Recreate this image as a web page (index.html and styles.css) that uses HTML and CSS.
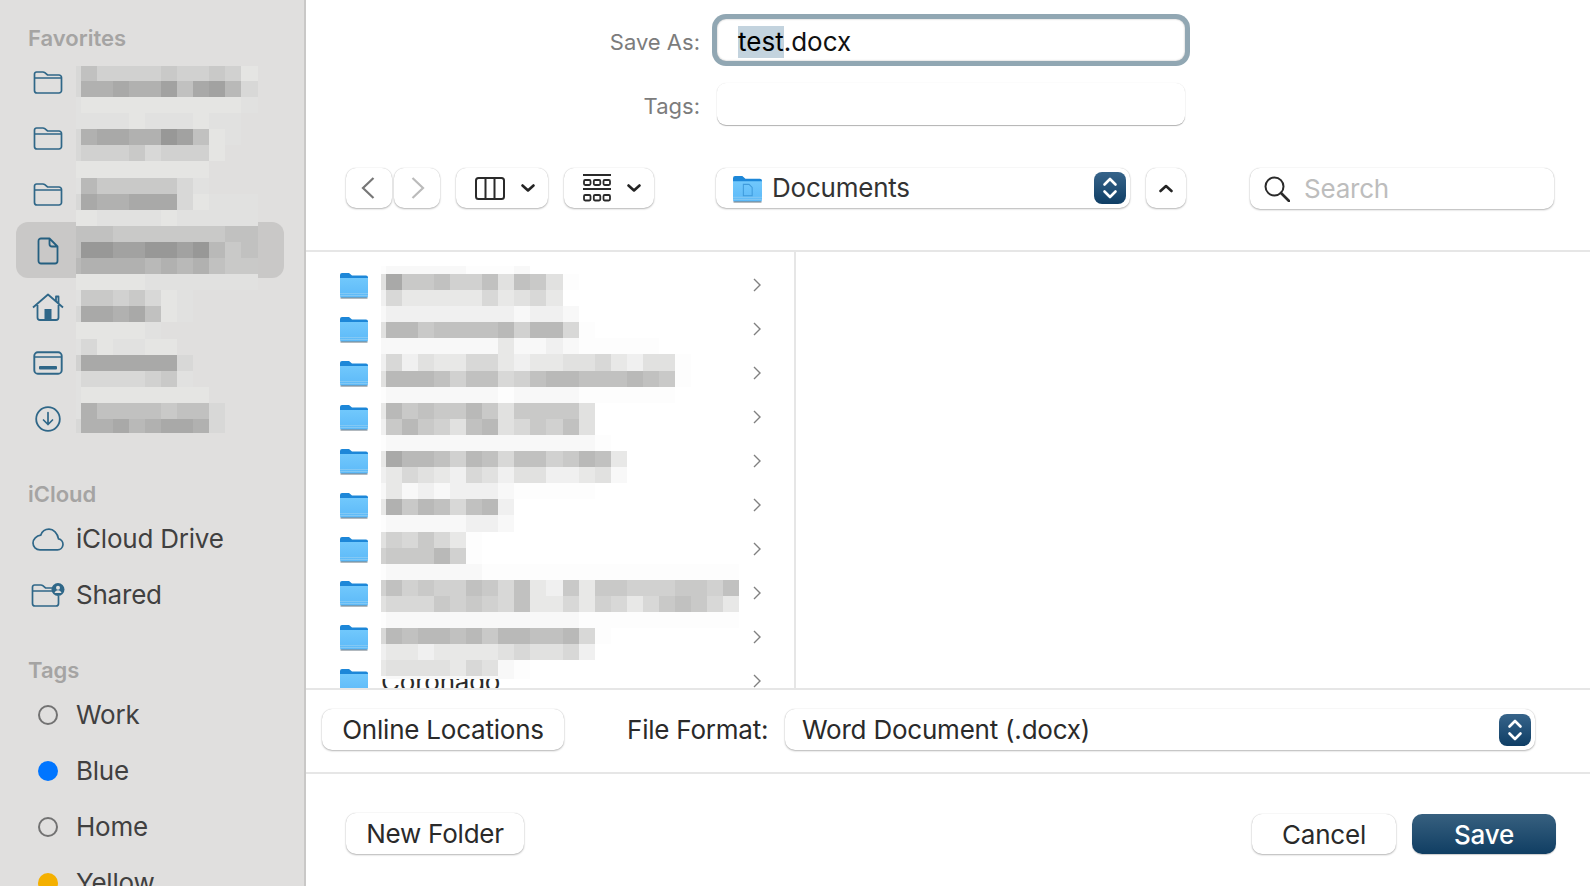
FILE: index.html
```html
<!DOCTYPE html>
<html lang="en">
<head>
<meta charset="utf-8">
<title>Save</title>
<link rel="stylesheet" href="styles.css">
</head>
<body>
<svg class="defs" aria-hidden="true">
  <defs>
    <linearGradient id="fbody" x1="0" y1="0" x2="0" y2="1"><stop offset="0" stop-color="#71c8fc"/><stop offset="1" stop-color="#5cb9f8"/></linearGradient>
    <symbol id="blue-folder" viewBox="0 0 28 28">
      <path d="M0 4a2 2 0 0 1 2-2h7l3 2.500h14a2 2 0 0 1 2 2V10H0z" fill="#1d87d8"/>
      <path d="M0 7h28v18a2 2 0 0 1-2 2H2a2 2 0 0 1-2-2z" fill="url(#fbody)"/>
      <path d="M0 22.500h28M0 24.500h28" stroke="#8ccbf2" stroke-width=".8"/>
      <path d="M.5 27h27" stroke="#7f8b94" stroke-width="1.200"/>
    </symbol>
    <symbol id="side-folder" viewBox="0 1 30 24">
      <path d="M1.500 4v16.500A2.500 2.500 0 0 0 4 23h22a2.500 2.500 0 0 0 2.500-2.500V7.500A2.500 2.500 0 0 0 26 5H14.500L11.800 2.700a3 3 0 0 0-2-.7H3.500a2 2 0 0 0-2 2zM1.500 8h27" fill="none" stroke="#2f6788" stroke-width="1.700"/>
    </symbol>
    <symbol id="stepper" viewBox="0 0 32 32">
      <path d="M10.500 12.500 16 7l5.500 5.500M10.500 19.500 16 25l5.500-5.500" fill="none" stroke="#fff" stroke-width="2.600" stroke-linecap="round" stroke-linejoin="round"/>
    </symbol>
    <symbol id="mini-chev" viewBox="0 0 14 8">
      <path d="M1.500 1.500 7 6.500l5.500-5" fill="none" stroke="#242424" stroke-width="2.600" stroke-linecap="round" stroke-linejoin="round"/>
    </symbol>
    <symbol id="row-chev" viewBox="0 0 8 14">
      <path d="M1 1l6 6-6 6" fill="none" stroke="#808080" stroke-width="1.400"/>
    </symbol>
  </defs>
</svg>

<div class="app">
  <aside class="sidebar">
    <h2 class="group-title">Favorites</h2>
    <div class="side-row"><span class="side-icon"><svg width="30" height="24"><use href="#side-folder"/></svg></span></div>
    <div class="side-row"><span class="side-icon"><svg width="30" height="24"><use href="#side-folder"/></svg></span></div>
    <div class="side-row"><span class="side-icon"><svg width="30" height="24"><use href="#side-folder"/></svg></span></div>
    <div class="side-row selected"><span class="side-icon">
      <svg width="22" height="28" viewBox="0 0 22 28"><path d="M4 1.500h8.500l8 8V24a2.500 2.500 0 0 1-2.500 2.500H4A2.500 2.500 0 0 1 1.500 24V4A2.500 2.500 0 0 1 4 1.500zM12.500 1.500V7a2.500 2.500 0 0 0 2.500 2.500h5.500" fill="none" stroke="#245f80" stroke-width="1.800" stroke-linejoin="round"/></svg>
    </span></div>
    <div class="side-row"><span class="side-icon">
      <svg width="32" height="28" viewBox="0 0 32 28"><path d="M1 14.500 16 1.500l15 13M5.500 12v12.500A2.500 2.500 0 0 0 8 27h16a2.500 2.500 0 0 0 2.500-2.500V12M24 8V3.500h2.500V10.500" fill="none" stroke="#2f6788" stroke-width="1.800" stroke-linejoin="round"/><rect x="12.500" y="16" width="7" height="11" fill="#2f6788"/></svg>
    </span></div>
    <div class="side-row"><span class="side-icon">
      <svg width="30" height="24" viewBox="0 0 30 24"><rect x="1.300" y="1.300" width="27.400" height="21.400" rx="3.500" fill="none" stroke="#2f6788" stroke-width="1.900"/><path d="M1.500 6h27" stroke="#2f6788" stroke-width="1.500"/><rect x="6" y="15" width="18" height="3.500" rx="1" fill="#2f6788"/></svg>
    </span></div>
    <div class="side-row"><span class="side-icon">
      <svg width="26" height="26" viewBox="0 0 26 26"><circle cx="13" cy="13" r="11.800" fill="none" stroke="#2f6788" stroke-width="1.800"/><path d="M13 6.500v12M8.500 14l4.500 4.500 4.500-4.500" fill="none" stroke="#2f6788" stroke-width="1.700" stroke-linecap="round" stroke-linejoin="round"/></svg>
    </span></div>

    <h2 class="group-title spaced">iCloud</h2>
    <div class="side-row"><span class="side-icon">
      <svg width="32" height="23" viewBox="0 0 32 23"><path d="M8 21.800h17.500a5.500 5.500 0 0 0 1-10.900C25.500 5 21.500 1.200 17 1.200c-4 0-7 2.400-8.300 6C4.500 7.800 1 11 1 15c0 3.800 3 6.800 7 6.800z" fill="none" stroke="#2f6788" stroke-width="1.700"/></svg>
    </span><span class="side-label">iCloud Drive</span></div>
    <div class="side-row"><span class="side-icon">
      <svg width="34" height="24" viewBox="0 0 34 24"><path d="M1.500 4v16.500A2.500 2.500 0 0 0 4 23h21a2.500 2.500 0 0 0 2.500-2.500V13M1.500 8H22M1.500 4a2 2 0 0 1 2-2h6.300a3 3 0 0 1 2 .7L14.500 5H21" fill="none" stroke="#2f6788" stroke-width="1.700"/><circle cx="27" cy="6.500" r="6.500" fill="#2f6788"/><circle cx="27" cy="4.800" r="2" fill="#e0dfde"/><path d="M23.500 10c.6-2 2-2.800 3.500-2.800s2.900.8 3.500 2.800z" fill="#e0dfde"/></svg>
    </span><span class="side-label">Shared</span></div>

    <h2 class="group-title spaced">Tags</h2>
    <div class="side-row"><span class="side-icon"><span class="tag-ring"></span></span><span class="side-label">Work</span></div>
    <div class="side-row"><span class="side-icon"><span class="tag-dot blue"></span></span><span class="side-label">Blue</span></div>
    <div class="side-row"><span class="side-icon"><span class="tag-ring"></span></span><span class="side-label">Home</span></div>
    <div class="side-row"><span class="side-icon"><span class="tag-dot yellow"></span></span><span class="side-label">Yellow</span></div>

    <div class="mosaic side-mosaic" aria-hidden="true">
      <div class="m short"><i class="p d8"></i><i class="c0"></i><i class="d0"></i><i class="d0"></i><i class="d0"></i><i class="d0"></i><i class="c8"></i><i class="d0"></i><i class="d0"></i><i class="c8"></i><i class="d0"></i><i class="e8"></i></div>
      <div class="m"><i class="p d8"></i><i class="b0"></i><i class="b0"></i><i class="a8"></i><i class="b0"></i><i class="b0"></i><i class="a0"></i><i class="c0"></i><i class="a8"></i><i class="a0"></i><i class="b8"></i><i class="d8"></i></div>
      <div class="m"><i class="p e0"></i><i class="e8"></i><i class="e8"></i><i class="e8"></i><i class="e8"></i><i class="e8"></i><i class="e8"></i><i class="e8"></i><i class="e8"></i><i class="e8"></i><i class="e8"></i><i class="e0"></i></div>
      <div class="m"><i class="p e0"></i><i class="e0"></i><i class="e0"></i><i class="e0"></i><i class="e8"></i><i class="e0"></i><i class="e0"></i><i class="e0"></i><i class="e8"></i><i class="e0"></i><i class="e0"></i></div>
      <div class="m"><i class="p d8"></i><i class="b0"></i><i class="a8"></i><i class="a8"></i><i class="b0"></i><i class="b0"></i><i class="n98"></i><i class="a0"></i><i class="c0"></i><i class="e8"></i><i class="e0"></i></div>
      <div class="m"><i class="p d8"></i><i class="d0"></i><i class="d0"></i><i class="d0"></i><i class="c8"></i><i class="d8"></i><i class="d0"></i><i class="d0"></i><i class="d0"></i><i class="e8"></i></div>
      <div class="m"><i class="p e8"></i><i class="e8"></i><i class="e8"></i><i class="e8"></i><i class="e8"></i><i class="e8"></i><i class="e8"></i><i class="e8"></i><i class="e8"></i></div>
      <div class="m"><i class="p e0"></i><i class="b8"></i><i class="c8"></i><i class="c8"></i><i class="c8"></i><i class="c8"></i><i class="c8"></i><i class="d8"></i><i class="e0"></i></div>
      <div class="m"><i class="p d8"></i><i class="a8"></i><i class="b0"></i><i class="b0"></i><i class="a8"></i><i class="a8"></i><i class="a8"></i><i class="d8"></i><i class="e8"></i><i class="e0"></i><i class="e0"></i><i class="e0"></i></div>
      <div class="m"><i class="p e8"></i><i class="e8"></i><i class="e0"></i><i class="e0"></i><i class="e0"></i><i class="e0"></i><i class="e8"></i><i class="e0"></i><i class="e0"></i><i class="e0"></i><i class="e0"></i><i class="e0"></i></div>
      <div class="m"><i class="p c0"></i><i class="c0"></i><i class="c0"></i><i class="c8"></i><i class="c8"></i><i class="c8"></i><i class="c8"></i><i class="c8"></i><i class="c8"></i><i class="c8"></i><i class="c0"></i><i class="c0"></i></div>
      <div class="m"><i class="p c0"></i><i class="n98"></i><i class="n98"></i><i class="a0"></i><i class="a0"></i><i class="n98"></i><i class="n98"></i><i class="a0"></i><i class="n98"></i><i class="b8"></i><i class="c8"></i><i class="c0"></i></div>
      <div class="m"><i class="p b8"></i><i class="b0"></i><i class="b0"></i><i class="b0"></i><i class="b0"></i><i class="b8"></i><i class="b0"></i><i class="b8"></i><i class="b0"></i><i class="c0"></i><i class="c8"></i><i class="c8"></i></div>
      <div class="m"><i class="p e8"></i><i class="e8"></i><i class="e8"></i><i class="e8"></i><i class="e8"></i><i class="e0"></i><i class="e0"></i><i class="e0"></i><i class="e0"></i><i class="e0"></i><i class="e0"></i><i class="e0"></i></div>
      <div class="m"><i class="p e0"></i><i class="c8"></i><i class="c8"></i><i class="d0"></i><i class="c8"></i><i class="d8"></i><i class="e8"></i><i class="e0"></i></div>
      <div class="m"><i class="p d8"></i><i class="a8"></i><i class="a8"></i><i class="b0"></i><i class="a8"></i><i class="c0"></i><i class="e8"></i><i class="e0"></i></div>
      <div class="m"><i class="p e8"></i><i class="e8"></i><i class="e8"></i><i class="e8"></i><i class="e8"></i><i class="e0"></i></div>
      <div class="m"><i class="p e0"></i><i class="d8"></i><i class="e8"></i><i class="e0"></i><i class="e0"></i><i class="e8"></i><i class="e8"></i></div>
      <div class="m"><i class="p d0"></i><i class="a8"></i><i class="a8"></i><i class="a8"></i><i class="a8"></i><i class="a8"></i><i class="a8"></i><i class="d8"></i></div>
      <div class="m"><i class="p e0"></i><i class="d8"></i><i class="d8"></i><i class="d8"></i><i class="d8"></i><i class="d0"></i><i class="c8"></i><i class="e0"></i></div>
      <div class="m"><i class="p e0"></i><i class="e8"></i><i class="e8"></i><i class="e8"></i><i class="e8"></i><i class="e8"></i><i class="e8"></i><i class="e8"></i><i class="e8"></i></div>
      <div class="m"><i class="p e0"></i><i class="b0"></i><i class="c0"></i><i class="c0"></i><i class="c0"></i><i class="c0"></i><i class="c8"></i><i class="c0"></i><i class="c0"></i><i class="d8"></i></div>
      <div class="m last"><i class="p d8"></i><i class="b0"></i><i class="b0"></i><i class="a8"></i><i class="b8"></i><i class="b0"></i><i class="a8"></i><i class="a8"></i><i class="b0"></i><i class="d8"></i></div>
    </div>
  </aside>

  <main class="main">
    <section class="name-form">
      <label class="form-label">Save As:</label>
      <div class="field focused"><span class="selection">test</span>.docx</div>
      <label class="form-label">Tags:</label>
      <div class="field"></div>
    </section>

    <section class="toolbar">
      <div class="nav-pair">
        <button class="btn nav back"><svg width="14" height="22" viewBox="0 0 14 22"><path d="M12.500 1 2 11l10.500 10" fill="none" stroke="#777" stroke-width="2.200"/></svg></button>
        <button class="btn nav forward"><svg width="14" height="22" viewBox="0 0 14 22"><path d="M1.500 1 12 11 1.500 21" fill="none" stroke="#bbb" stroke-width="2.200"/></svg></button>
      </div>
      <button class="btn view">
        <svg width="30" height="23" viewBox="0 0 30 23"><rect x="1" y="1" width="28" height="21" rx="2.500" fill="none" stroke="#2a2a2a" stroke-width="2"/><path d="M10.500 1v21M19.500 1v21" stroke="#2a2a2a" stroke-width="2"/></svg>
        <svg width="14" height="8"><use href="#mini-chev"/></svg>
      </button>
      <button class="btn group">
        <svg width="28" height="28" viewBox="0 0 28 28"><path d="M0 1h28M0 15h28" stroke="#2a2a2a" stroke-width="1.800"/><g fill="none" stroke="#2a2a2a" stroke-width="1.800"><rect x="1" y="6" width="6.500" height="5" rx="1.200"/><rect x="10.800" y="6" width="6.500" height="5" rx="1.200"/><rect x="20.500" y="6" width="6.500" height="5" rx="1.200"/><rect x="1" y="21" width="6.500" height="5.500" rx="1.200"/><rect x="10.800" y="21" width="6.500" height="5.500" rx="1.200"/><rect x="20.500" y="21" width="6.500" height="5.500" rx="1.200"/></g></svg>
        <svg width="14" height="8"><use href="#mini-chev"/></svg>
      </button>
      <div class="btn location">
        <svg class="loc-folder" width="29" height="29" viewBox="0 0 28 28"><use href="#blue-folder"/><path d="M10 10h5.500l3 3v8h-8.500z" fill="none" stroke="#3f9bdc" stroke-width="1"/></svg>
        <span class="loc-name">Documents</span>
        <span class="stepper"><svg width="32" height="32"><use href="#stepper"/></svg></span>
      </div>
      <button class="btn up"><svg width="14" height="9" viewBox="0 0 14 8"><path d="M1.500 6.500 7 1.500l5.500 5" fill="none" stroke="#242424" stroke-width="2.600" stroke-linecap="round" stroke-linejoin="round"/></svg></button>
      <div class="btn search">
        <svg width="26" height="26" viewBox="0 0 26 26"><circle cx="10.500" cy="10.500" r="9" fill="none" stroke="#2a2a2a" stroke-width="2"/><path d="M17 17l8 8" stroke="#2a2a2a" stroke-width="2.600" stroke-linecap="round"/></svg>
        <span class="search-text">Search</span>
      </div>
    </section>

    <section class="browser">
      <div class="list">
        <div class="list-row"><svg width="28" height="28"><use href="#blue-folder"/></svg><svg width="8" height="14"><use href="#row-chev"/></svg></div>
        <div class="list-row"><svg width="28" height="28"><use href="#blue-folder"/></svg><svg width="8" height="14"><use href="#row-chev"/></svg></div>
        <div class="list-row"><svg width="28" height="28"><use href="#blue-folder"/></svg><svg width="8" height="14"><use href="#row-chev"/></svg></div>
        <div class="list-row"><svg width="28" height="28"><use href="#blue-folder"/></svg><svg width="8" height="14"><use href="#row-chev"/></svg></div>
        <div class="list-row"><svg width="28" height="28"><use href="#blue-folder"/></svg><svg width="8" height="14"><use href="#row-chev"/></svg></div>
        <div class="list-row"><svg width="28" height="28"><use href="#blue-folder"/></svg><svg width="8" height="14"><use href="#row-chev"/></svg></div>
        <div class="list-row"><svg width="28" height="28"><use href="#blue-folder"/></svg><svg width="8" height="14"><use href="#row-chev"/></svg></div>
        <div class="list-row"><svg width="28" height="28"><use href="#blue-folder"/></svg><svg width="8" height="14"><use href="#row-chev"/></svg></div>
        <div class="list-row"><svg width="28" height="28"><use href="#blue-folder"/></svg><svg width="8" height="14"><use href="#row-chev"/></svg></div>
        <div class="list-row"><svg width="28" height="28"><use href="#blue-folder"/></svg><span class="row-name">Coronado</span><svg width="8" height="14"><use href="#row-chev"/></svg></div>

        <div class="mosaic list-mosaic" aria-hidden="true">
          <div class="m half"><i class="p fc"></i><i class="f8"></i><i class="f8"></i><i class="f8"></i><i class="f8"></i><i class="f8"></i><i class="fc"></i><i class="fc"></i><i class="fc"></i><i class="f8"></i></div>
          <div class="m"><i class="p e0"></i><i class="a8"></i><i class="c8"></i><i class="c8"></i><i class="c0"></i><i class="d0"></i><i class="d0"></i><i class="c0"></i><i class="e0"></i><i class="c0"></i><i class="c8"></i><i class="e0"></i><i class="fc"></i></div>
          <div class="m"><i class="p f0"></i><i class="d8"></i><i class="e8"></i><i class="e8"></i><i class="e8"></i><i class="e8"></i><i class="e8"></i><i class="d8"></i><i class="e8"></i><i class="e0"></i><i class="d8"></i><i class="e8"></i></div>
          <div class="m"><i class="p f8"></i><i class="f0"></i><i class="f0"></i><i class="f0"></i><i class="f0"></i><i class="f0"></i><i class="f0"></i><i class="f0"></i><i class="f0"></i><i class="f8"></i><i class="f0"></i><i class="f0"></i><i class="f8"></i></div>
          <div class="m"><i class="p e0"></i><i class="b8"></i><i class="b8"></i><i class="c8"></i><i class="c0"></i><i class="c0"></i><i class="c0"></i><i class="c0"></i><i class="b8"></i><i class="d0"></i><i class="b8"></i><i class="b8"></i><i class="d8"></i><i class="fc"></i></div>
          <div class="m"><i class="p f8"></i><i class="f8"></i><i class="f8"></i><i class="f8"></i><i class="f8"></i><i class="f8"></i><i class="f8"></i><i class="f8"></i><i class="e8"></i><i class="f8"></i><i class="f8"></i><i class="f0"></i><i class="f8"></i><i class="fc"></i><i class="fc"></i><i class="fc"></i><i class="fc"></i><i class="fc"></i></div>
          <div class="m"><i class="p f0"></i><i class="d8"></i><i class="f0"></i><i class="e0"></i><i class="e8"></i><i class="e8"></i><i class="d8"></i><i class="d8"></i><i class="e8"></i><i class="f0"></i><i class="e8"></i><i class="e8"></i><i class="e0"></i><i class="e0"></i><i class="d8"></i><i class="e8"></i><i class="f0"></i><i class="e0"></i><i class="e0"></i><i class="fc"></i></div>
          <div class="m"><i class="p e0"></i><i class="b8"></i><i class="b8"></i><i class="b8"></i><i class="c0"></i><i class="d0"></i><i class="c0"></i><i class="c0"></i><i class="d8"></i><i class="d0"></i><i class="c0"></i><i class="b8"></i><i class="b8"></i><i class="c0"></i><i class="c0"></i><i class="c0"></i><i class="b8"></i><i class="c0"></i><i class="c8"></i><i class="fc"></i></div>
          <div class="m"><i class="p fc"></i><i class="f8"></i><i class="f8"></i><i class="f8"></i><i class="f8"></i><i class="f8"></i><i class="f8"></i><i class="f8"></i><i class="fc"></i><i class="f8"></i><i class="f8"></i><i class="f8"></i><i class="f8"></i><i class="fc"></i><i class="fc"></i><i class="fc"></i><i class="fc"></i><i class="fc"></i><i class="fc"></i></div>
          <div class="m"><i class="p e8"></i><i class="b8"></i><i class="c8"></i><i class="c0"></i><i class="c8"></i><i class="c8"></i><i class="b8"></i><i class="c8"></i><i class="e0"></i><i class="c8"></i><i class="c8"></i><i class="c8"></i><i class="c8"></i><i class="e0"></i></div>
          <div class="m"><i class="p f0"></i><i class="c8"></i><i class="b8"></i><i class="c8"></i><i class="d0"></i><i class="e0"></i><i class="c0"></i><i class="b8"></i><i class="e0"></i><i class="d8"></i><i class="c8"></i><i class="d0"></i><i class="c0"></i><i class="e0"></i></div>
          <div class="m"><i class="p fc"></i><i class="f8"></i><i class="f8"></i><i class="f8"></i><i class="f8"></i><i class="f8"></i><i class="f8"></i><i class="f8"></i><i class="f8"></i><i class="f8"></i><i class="f8"></i><i class="f8"></i><i class="f8"></i><i class="f8"></i><i class="fc"></i></div>
          <div class="m"><i class="p e8"></i><i class="a8"></i><i class="b8"></i><i class="b8"></i><i class="c0"></i><i class="d0"></i><i class="b8"></i><i class="c0"></i><i class="d8"></i><i class="c0"></i><i class="c0"></i><i class="d0"></i><i class="c8"></i><i class="b8"></i><i class="c0"></i><i class="e8"></i></div>
          <div class="m"><i class="p f0"></i><i class="e8"></i><i class="d8"></i><i class="e0"></i><i class="e8"></i><i class="f0"></i><i class="d8"></i><i class="e0"></i><i class="f0"></i><i class="e0"></i><i class="e0"></i><i class="f0"></i><i class="f0"></i><i class="e8"></i><i class="e0"></i><i class="f8"></i></div>
          <div class="m"><i class="p f8"></i><i class="e8"></i><i class="f8"></i><i class="f0"></i><i class="f8"></i><i class="f0"></i><i class="f0"></i><i class="f0"></i><i class="f8"></i><i class="fc"></i><i class="fc"></i><i class="fc"></i><i class="fc"></i><i class="fc"></i></div>
          <div class="m"><i class="p e8"></i><i class="b0"></i><i class="c8"></i><i class="b8"></i><i class="c0"></i><i class="d8"></i><i class="c0"></i><i class="b8"></i><i class="f0"></i></div>
          <div class="m"><i class="p fc"></i><i class="f8"></i><i class="f8"></i><i class="f8"></i><i class="f8"></i><i class="f8"></i><i class="f0"></i><i class="f0"></i><i class="f8"></i></div>
          <div class="m"><i class="p e0"></i><i class="d0"></i><i class="d8"></i><i class="c8"></i><i class="d8"></i><i class="e8"></i><i class="fc"></i></div>
          <div class="m"><i class="p d0"></i><i class="c8"></i><i class="c8"></i><i class="c8"></i><i class="b8"></i><i class="d0"></i><i class="fc"></i></div>
          <div class="m"><i class="p fc"></i><i class="f8"></i><i class="f8"></i><i class="f8"></i><i class="f8"></i><i class="f8"></i><i class="f8"></i><i class="fc"></i><i class="fc"></i><i class="fc"></i><i class="fc"></i><i class="fc"></i><i class="fc"></i><i class="fc"></i><i class="fc"></i><i class="fc"></i><i class="fc"></i><i class="fc"></i><i class="fc"></i><i class="fc"></i><i class="fc"></i><i class="fc"></i><i class="fc"></i></div>
          <div class="m"><i class="p d0"></i><i class="c0"></i><i class="d0"></i><i class="c8"></i><i class="d0"></i><i class="d0"></i><i class="c0"></i><i class="c8"></i><i class="d8"></i><i class="c0"></i><i class="e8"></i><i class="f0"></i><i class="c8"></i><i class="e8"></i><i class="c8"></i><i class="c8"></i><i class="d0"></i><i class="d0"></i><i class="d0"></i><i class="c8"></i><i class="c8"></i><i class="d0"></i><i class="c0"></i></div>
          <div class="m"><i class="p e0"></i><i class="d8"></i><i class="d8"></i><i class="d8"></i><i class="c8"></i><i class="d0"></i><i class="c8"></i><i class="d0"></i><i class="d8"></i><i class="c0"></i><i class="e8"></i><i class="e8"></i><i class="d8"></i><i class="e8"></i><i class="d0"></i><i class="d8"></i><i class="e8"></i><i class="d8"></i><i class="c8"></i><i class="c0"></i><i class="c8"></i><i class="d8"></i><i class="e8"></i></div>
          <div class="m"><i class="p fc"></i><i class="f8"></i><i class="f8"></i><i class="f8"></i><i class="f8"></i><i class="f8"></i><i class="f8"></i><i class="f8"></i><i class="f8"></i><i class="f8"></i><i class="f8"></i><i class="f8"></i><i class="f8"></i><i class="fc"></i><i class="fc"></i><i class="fc"></i><i class="fc"></i><i class="fc"></i><i class="fc"></i><i class="fc"></i><i class="fc"></i><i class="fc"></i><i class="fc"></i></div>
          <div class="m"><i class="p d8"></i><i class="b8"></i><i class="c0"></i><i class="b8"></i><i class="b8"></i><i class="c0"></i><i class="b8"></i><i class="c8"></i><i class="b8"></i><i class="b8"></i><i class="c0"></i><i class="c0"></i><i class="b8"></i><i class="d8"></i><i class="fc"></i></div>
          <div class="m"><i class="p f0"></i><i class="e8"></i><i class="e8"></i><i class="f0"></i><i class="e8"></i><i class="e8"></i><i class="e8"></i><i class="e8"></i><i class="e0"></i><i class="d8"></i><i class="e0"></i><i class="e0"></i><i class="d8"></i><i class="f0"></i></div>
          <div class="m"><i class="p e8"></i><i class="e0"></i><i class="e0"></i><i class="e0"></i><i class="e0"></i><i class="e8"></i><i class="d8"></i><i class="e0"></i><i class="f8"></i><i class="fc"></i></div>
          <div class="m sliver"><i class="p fc"></i><i class="f8"></i><i class="f8"></i><i class="f8"></i><i class="f8"></i><i class="f8"></i><i class="f8"></i><i class="f8"></i><i class="f8"></i><i class="fc"></i></div>
        </div>
      </div>
      <div class="preview"></div>
    </section>

    <section class="format-bar">
      <button class="btn text-btn online">Online Locations</button>
      <span class="format-label">File Format:</span>
      <div class="btn format-select">
        <span>Word Document (.docx)</span>
        <span class="stepper"><svg width="32" height="32"><use href="#stepper"/></svg></span>
      </div>
    </section>

    <footer class="footer">
      <button class="btn text-btn new-folder">New Folder</button>
      <div class="actions">
        <button class="btn text-btn cancel">Cancel</button>
        <button class="btn text-btn save">Save</button>
      </div>
    </footer>
  </main>
</div>
</body>
</html>
```
FILE: styles.css
```css
* { box-sizing: border-box; }
html, body { margin: 0; height: 100%; overflow: hidden; background: #fff; }
body { font-family: Inter, "Liberation Sans", sans-serif; font-size: 26px; letter-spacing: -.22px; color: #2a2a2a; }
.defs { position: absolute; width: 0; height: 0; }
.app { display: flex; height: 886px; }

/* sidebar */
.sidebar { position: relative; width: 306px; flex: none; background: #e0dfde; border-right: 2px solid #c9c8c7; padding-top: 21px; overflow: hidden; }
.group-title { margin: 0 0 0 28px; height: 34px; line-height: 34px; font-size: 22px; font-weight: 600; letter-spacing: 0; color: #a5a4a3; }
.group-title.spaced { margin-top: 30px; }
.side-row { display: flex; align-items: center; height: 56px; margin-left: 16px; width: 268px; padding-left: 4px; border-radius: 12px; color: #404040; }
.side-row.selected { background: #c9c8c7; margin: -1px 0 1px 16px; padding-top: 2px; }
.side-icon { width: 56px; flex: none; display: flex; justify-content: center; align-items: center; }
.side-icon svg { display: block; }
.side-label { line-height: 30px; }
.tag-ring { width: 20px; height: 20px; border-radius: 50%; border: 2px solid #727272; }
.tag-dot { width: 20px; height: 20px; border-radius: 50%; }
.tag-dot.blue { background: #0075ff; }
.tag-dot.yellow { background: #f4b000; }

/* pixelated mosaic covering the redacted names */
.mosaic { position: absolute; }
.side-mosaic { left: 76px; top: 66px; }
.list-mosaic { left: 75px; top: 14px; }
.m { display: flex; height: 16.1px; }
.m.short { height: 15px; }
.m.last { height: 14px; }
.m.half { height: 8px; }
.m.sliver { height: 3px; }
.m i { display: block; width: 16.06px; flex: none; }
.m i.p { width: 5px; }
.n98 { background: #989897; }
.a0 { background: #a2a2a1; }
.a8 { background: #a9a9a8; }
.b0 { background: #b1b1b0; }
.b8 { background: #b9b9b8; }
.c0 { background: #c1c1c0; }
.c8 { background: #c9c9c8; }
.d0 { background: #d1d1d0; }
.d8 { background: #d8d8d7; }
.e0 { background: #e1e1e0; }
.e8 { background: #e8e8e7; }
.side-mosaic .e8 { background: #e5e5e3; }
.f0 { background: #f0f0f0; }
.f8 { background: #f8f8f8; }
.fc { background: #fdfdfd; }

/* main column */
.main { flex: 1; min-width: 0; display: flex; flex-direction: column; background: #fff; }
.btn { background: #fff; border: 0; border-radius: 10px; box-shadow: 0 1px 2px rgba(0,0,0,.28), 0 0 1px rgba(0,0,0,.22); font: inherit; letter-spacing: inherit; color: inherit; padding: 0; }

.name-form { display: grid; grid-template-columns: 394px 468px; column-gap: 17px; row-gap: 22px; padding-top: 19px; align-items: center; }
.form-label { text-align: right; font-size: 22px; letter-spacing: 0; color: #7c7c7c; padding-top: 3px; }
.field { height: 42px; border-radius: 9px; background: #fff; box-shadow: 0 1px 1px rgba(0,0,0,.3), 0 0 1px rgba(0,0,0,.12); padding: 2px 0 0 21px; line-height: 42px; font-size: 26px; letter-spacing: 0; color: #111; }
.field.focused { box-shadow: 0 0 0 5px #91a7b3, inset 0 0 2px rgba(0,0,0,.3); }
.selection { display: inline-block; background: #c3d3de; color: #000; height: 32px; line-height: 32px; }

.toolbar { display: flex; align-items: flex-start; height: 41px; margin-top: 43px; padding-left: 40px; }
.nav-pair { display: flex; gap: 2px; }
.nav { width: 46px; height: 40px; display: flex; align-items: center; justify-content: center; }
.back svg { margin-right: 2px; }
.forward svg { margin-left: 2px; }
.view { width: 92px; height: 40px; margin-left: 16px; display: flex; align-items: center; padding-left: 19px; gap: 16px; }
.group { width: 90px; height: 40px; margin-left: 16px; display: flex; align-items: center; padding-left: 19px; gap: 16px; }
.location { width: 414px; height: 40px; margin-left: 62px; display: flex; align-items: center; padding: 0 4px 0 17px; }
.loc-folder { flex: none; }
.loc-name { flex: 1; margin-left: 10px; color: #333; padding-bottom: 2px; }
.stepper { width: 32px; height: 32px; flex: none; border-radius: 8px; background: linear-gradient(#37648a, #0f3e65); }
.stepper svg { display: block; }
.up { width: 40px; height: 40px; margin-left: 16px; display: flex; align-items: center; justify-content: center; }
.search { width: 304px; height: 41px; margin-left: 64px; display: flex; align-items: center; padding-left: 14px; gap: 14px; }
.search-text { color: #bdbdbd; }

.browser { flex: 1; min-height: 0; display: flex; margin-top: 41px; border-top: 2px solid #e6e6e6; }
.list { position: relative; width: 490px; flex: none; border-right: 2px solid #e6e6e6; padding-top: 11px; overflow: hidden; }
.list-row { display: flex; align-items: center; height: 44px; padding: 0 33px 0 34px; }
.list-row > svg:last-child { margin-left: auto; }
.row-name { margin-left: 13px; color: #2a2a2a; }
.preview { flex: 1; }

.format-bar { height: 84px; flex: none; border-top: 2px solid #e6e6e6; display: flex; align-items: flex-start; padding: 19px 0 0 16px; }
.text-btn { height: 41px; text-align: center; }
.online { width: 242px; }
.format-label { width: 140px; flex: none; margin-left: 63px; line-height: 41px; white-space: nowrap; }
.format-select { width: 750px; height: 41px; margin-left: 18px; display: flex; align-items: center; justify-content: space-between; padding: 0 4px 0 17px; }

.footer { height: 114px; flex: none; border-top: 2px solid #e6e6e6; display: flex; align-items: flex-start; justify-content: space-between; padding: 39px 34px 0 40px; }
.new-folder { width: 178px; }
.actions { display: flex; gap: 16px; padding-top: 1px; }
.cancel { width: 144px; height: 40px; }
.save { width: 144px; height: 40px; color: #fff; font-weight: 500; background: linear-gradient(#37607f, #103e63); box-shadow: 0 1px 1px rgba(0,0,0,.2); }
```
